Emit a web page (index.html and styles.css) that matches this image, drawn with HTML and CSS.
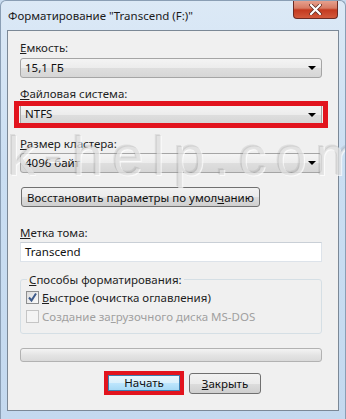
FILE: index.html
```html
<!DOCTYPE html>
<html lang="ru">
<head>
    <meta charset="UTF-8">
    <title>Форматирование "Transcend (F:)"</title>
    <link rel="stylesheet" href="styles.css">
</head>
<body>
    <div class="window">
        <div class="titlebar">
            <span class="title">Форматирование "Transcend (F:)"</span>
            <button class="close-btn" aria-label="Закрыть">
                <svg width="13" height="11" viewBox="0 0 13 11">
                    <path d="M2 1 L11 10 M11 1 L2 10" stroke="#5a2a22" stroke-width="3.6" stroke-linecap="round"/>
                    <path d="M2 1 L11 10 M11 1 L2 10" stroke="#fff" stroke-width="2.2" stroke-linecap="round"/>
                </svg>
            </button>
        </div>

        <div class="panel">
            <label class="field-label"><u>Е</u>мкость:</label>
            <div class="combo">15,1 ГБ<span class="arrow"></span></div>

            <label class="field-label gap"><u>Ф</u>айловая система:</label>
            <div class="highlight">
                <div class="combo combo-short">NTFS<span class="arrow"></span></div>
            </div>

            <label class="field-label gap"><u>Р</u>азмер кластера:</label>
            <div class="combo combo-tight">4096 байт<span class="arrow"></span></div>

            <button class="btn btn-reset">Восстановить параметры по умол<u>ч</u>анию</button>

            <label class="field-label gap-lg"><u>М</u>етка тома:</label>
            <div class="textbox">Transcend</div>

            <fieldset class="group">
                <legend><u>С</u>пособы форматирования:</legend>
                <div class="check-row">
                    <span class="checkbox">
                        <svg width="11" height="11" viewBox="0 0 11 11">
                            <path d="M2 5.5 L4.5 8.5 L9 1.5" fill="none" stroke="#3d5a8a" stroke-width="2"/>
                        </svg>
                    </span>
                    <span><u>Б</u>ыстрое (очистка оглавления)</span>
                </div>
                <div class="check-row disabled">
                    <span class="checkbox"></span>
                    <span>Создание за<u>г</u>рузочного диска MS-DOS</span>
                </div>
            </fieldset>

            <div class="progress"></div>

            <div class="actions">
                <div class="highlight highlight-btn">
                    <button class="btn btn-default">Начать</button>
                </div>
                <button class="btn btn-close"><u>З</u>акрыть</button>
            </div>
        </div>

        <div class="watermark" aria-hidden="true">pk-help.com</div>
    </div>
</body>
</html>
```

FILE: styles.css
```css
/* Window frame */
body {
    margin: 0;
    padding: 0;
    background-color: #c9dcf0;
    font-family: 'Noto Sans', 'DejaVu Sans', sans-serif;
    font-size: 11.5px;
    color: #000;
}

.window {
    position: relative;
    width: 346px;
    height: 419px;
    overflow: hidden;
    display: flex;
    flex-direction: column;
    background: linear-gradient(to bottom, #dce9f6 0%, #cadef2 40%, #c4d9ef 100%);
    border-radius: 6px 6px 0 0;
    box-sizing: border-box;
    border: 1px solid #8a9eb4;
    border-bottom: none;
}

.titlebar {
    height: 29px;
    display: flex;
    justify-content: space-between;
    align-items: flex-start;
    flex-shrink: 0;
}

.title {
    margin-left: 7px;
    line-height: 29px;
    font-size: 11.5px;
    color: #1a1a1a;
}

.close-btn {
    width: 45px;
    height: 19px;
    margin-top: -1px;
    margin-right: 7px;
    border: 1px solid #6b2b24;
    border-top: none;
    border-radius: 0 0 4px 4px;
    background: linear-gradient(to bottom, #e8a593 0%, #d77b64 45%, #c43a1f 55%, #d2593c 100%);
    display: flex;
    align-items: center;
    justify-content: center;
    padding: 0;
}

/* Dialog body */
.panel {
    flex: 1;
    margin: 0 6px 8px 6px;
    background-color: #f0f0f0;
    border: 1px solid #7b8896;
    padding: 9px 16px 0 12px;
    display: flex;
    flex-direction: column;
    align-items: flex-start;
}

.field-label {
    display: block;
    line-height: 15px;
    color: #1e1e1e;
}

.field-label.gap {
    margin-top: 8px;
}

.field-label.gap-lg {
    margin-top: 18px;
}

.combo {
    position: relative;
    align-self: stretch;
    margin-top: 3px;
    height: 20px;
    line-height: 18px;
    box-sizing: border-box;
    padding-left: 4px;
    border: 1px solid #a5a5a5;
    border-radius: 3px;
    background: linear-gradient(to bottom, #f4f4f4 0%, #ececec 50%, #dedede 51%, #d6d6d6 100%);
    color: #111;
}

.combo-tight {
    margin-top: 2px;
}

.combo-short {
    margin-top: 0;
    height: 17px;
    line-height: 16px;
    border-top: none;
    border-bottom: none;
    border-radius: 0;
}

.arrow {
    position: absolute;
    right: 5px;
    top: 50%;
    margin-top: -2px;
    width: 0;
    height: 0;
    border-left: 4px solid transparent;
    border-right: 4px solid transparent;
    border-top: 4px solid #000;
}

.highlight {
    align-self: stretch;
    margin: 0 -6px;
    border: 5px solid #e2141e;
    padding: 0 1px;
}

/* Buttons */
.btn {
    font-family: inherit;
    font-size: 11.5px;
    color: #111;
    border: 1px solid #707070;
    border-radius: 3px;
    background: linear-gradient(to bottom, #f2f2f2 0%, #ebebeb 50%, #dddddd 51%, #cfcfcf 100%);
    padding: 0;
    box-sizing: border-box;
}

.btn-reset {
    margin-top: 14px;
    width: 239px;
    height: 20px;
    margin-left: 1px;
}

.textbox {
    align-self: stretch;
    margin-top: 2px;
    height: 20px;
    line-height: 18px;
    box-sizing: border-box;
    padding-left: 4px;
    background-color: #fff;
    border: 1px solid #dde3ea;
    border-top-color: #c9cfd6;
    color: #111;
}

.group {
    align-self: stretch;
    margin: 10px 0 0 0;
    padding: 1px 6px 7px 5px;
    border: 1px solid #d5dfe5;
    border-radius: 3px;
    min-width: 0;
}

.group legend {
    padding: 0 2px;
    margin-left: 1px;
    line-height: 15px;
    color: #1e1e1e;
}

.check-row {
    display: flex;
    align-items: center;
    gap: 3px;
    line-height: 19px;
    color: #1e1e1e;
}

.check-row.disabled {
    color: #a0a0a0;
}

.checkbox {
    width: 13px;
    height: 13px;
    box-sizing: border-box;
    border: 1px solid #8e8f8f;
    background: linear-gradient(to bottom right, #dcdcdc, #fbfbfb);
    display: flex;
    align-items: center;
    justify-content: center;
}

.check-row.disabled .checkbox {
    border-color: #c5c5c5;
    background: #f4f4f4;
}

.progress {
    align-self: stretch;
    margin-top: 14px;
    height: 12px;
    border: 1px solid #b2b2b2;
    border-radius: 3px;
    background: linear-gradient(to bottom, #f3f3f3 0%, #e4e4e4 50%, #dadada 100%);
}

.actions {
    display: flex;
    align-items: center;
    gap: 5px;
    margin-top: 9px;
    margin-left: 84px;
}

.highlight-btn {
    margin: 0;
    border-width: 4px;
    padding: 0;
}

.btn-default {
    display: block;
    width: 72px;
    height: 16px;
    border-color: #3c7fb1;
    border-radius: 0;
    background: linear-gradient(to bottom, #eaf6fd 0%, #d9f0fc 50%, #bee6fd 51%, #a7d9f5 100%);
    line-height: 14px;
}

.btn-close {
    width: 72px;
    height: 21px;
}

/* Watermark over the dialog */
.watermark {
    position: absolute;
    left: -34px;
    top: 122px;
    font-family: 'Liberation Sans', sans-serif;
    font-size: 56px;
    letter-spacing: 9px;
    color: rgba(150, 150, 150, 0.2);
    text-shadow: 1px 1px 0 rgba(255, 255, 255, 0.7), -1px -1px 0 rgba(120, 120, 120, 0.15);
    white-space: nowrap;
    pointer-events: none;
}
```
